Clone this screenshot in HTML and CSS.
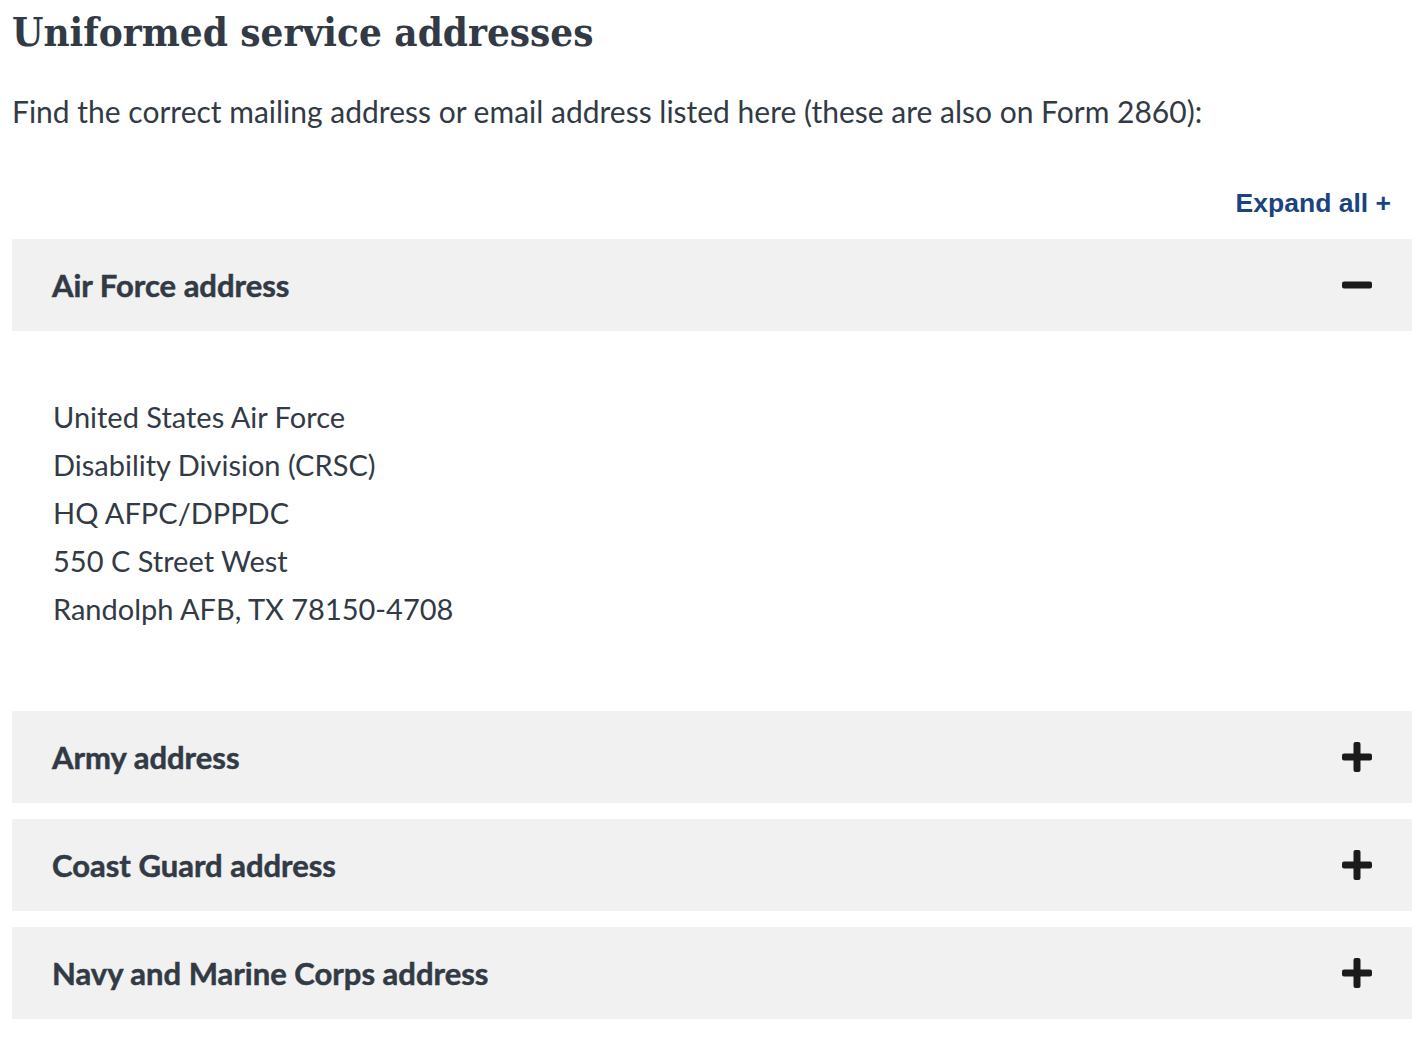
FILE: index.html
```html
<!DOCTYPE html>
<html lang="en">
<head>
<meta charset="utf-8">
<title>Uniformed service addresses</title>
<link rel="stylesheet" href="styles.css">
</head>
<body>
<main class="page">
  <h1 class="title">Uniformed service addresses</h1>
  <p class="intro">Find the correct mailing address or email address listed here (these are also on Form 2860):</p>
  <div class="expand-row"><a class="expand-all" href="#">Expand all +</a></div>
  <div class="accordion">
    <section class="item open">
      <div class="item-head">
        <span class="item-title">Air Force address</span>
        <svg class="icon" width="30" height="30" viewBox="0 0 30 30" aria-hidden="true"><rect x="0" y="11.5" width="30" height="7" rx="2" fill="#1b1b1b"/></svg>
      </div>
      <div class="item-body">
        <p class="address">United States Air Force<br>Disability Division (CRSC)<br>HQ AFPC/DPPDC<br>550 C Street West<br>Randolph AFB, TX 78150-4708</p>
      </div>
    </section>
    <section class="item">
      <div class="item-head">
        <span class="item-title">Army address</span>
        <svg class="icon" width="30" height="30" viewBox="0 0 30 30" aria-hidden="true"><rect x="0" y="11.5" width="30" height="7" rx="2" fill="#1b1b1b"/><rect x="11.5" y="0" width="7" height="30" rx="2" fill="#1b1b1b"/></svg>
      </div>
    </section>
    <section class="item">
      <div class="item-head">
        <span class="item-title">Coast Guard address</span>
        <svg class="icon" width="30" height="30" viewBox="0 0 30 30" aria-hidden="true"><rect x="0" y="11.5" width="30" height="7" rx="2" fill="#1b1b1b"/><rect x="11.5" y="0" width="7" height="30" rx="2" fill="#1b1b1b"/></svg>
      </div>
    </section>
    <section class="item">
      <div class="item-head">
        <span class="item-title">Navy and Marine Corps address</span>
        <svg class="icon" width="30" height="30" viewBox="0 0 30 30" aria-hidden="true"><rect x="0" y="11.5" width="30" height="7" rx="2" fill="#1b1b1b"/><rect x="11.5" y="0" width="7" height="30" rx="2" fill="#1b1b1b"/></svg>
      </div>
    </section>
  </div>
</main>
</body>
</html>
```

FILE: styles.css
```css
* { box-sizing: border-box; }
html, body { margin: 0; padding: 0; background: #ffffff; }
body {
  color: #323a45;
  font-family: Lato, "Noto Sans", sans-serif;
}
.page {
  width: 1400px;
  margin-left: 12px;
  padding-top: 6px;
}
.title {
  margin: 0;
  font-family: "DejaVu Serif Condensed", "DejaVu Serif", serif;
  font-weight: 700;
  font-size: 40px;
  line-height: 52px;
  color: #323a45;
}
.intro {
  margin: 33px 0 0 0;
  font-size: 30px;
  line-height: 40px;
}
.expand-row {
  display: flex;
  justify-content: flex-end;
  padding-right: 21px;
  margin-top: 57px;
}
.expand-all {
  font-family: "Liberation Sans", Arial, sans-serif;
  font-weight: 700;
  font-size: 26.5px;
  line-height: 30px;
  color: #1a4480;
  text-decoration: none;
}
.accordion {
  margin-top: 21px;
  display: flex;
  flex-direction: column;
  gap: 16px;
}
.item-head {
  height: 92px;
  background: #f1f1f1;
  display: flex;
  align-items: center;
  justify-content: space-between;
  padding: 0 40px 0 40px;
}
.item-title {
  font-weight: 700;
  font-size: 31px;
  color: #323a45;
  -webkit-text-stroke: 0.5px #323a45;
}
.icon { display: block; }
.item.open { margin-bottom: -16px; }
.item-body {
  padding: 62px 40px 78px 41px;
}
.address {
  margin: 0;
  font-size: 29px;
  line-height: 48px;
}
```
